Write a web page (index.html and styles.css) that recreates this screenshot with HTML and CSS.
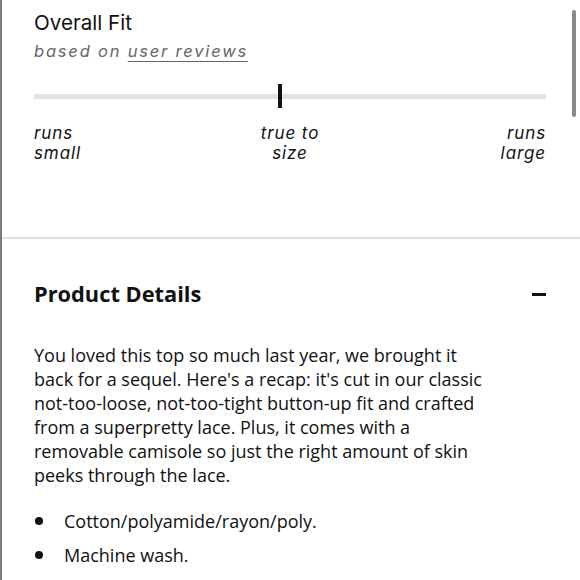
FILE: index.html
```html
<!DOCTYPE html>
<html>
<head>
<meta charset="utf-8">
<link rel="stylesheet" href="styles.css">
</head>
<body>
<div class="page">
  <section class="fit">
    <h2 class="fit-title">Overall Fit</h2>
    <p class="fit-sub">based on <span class="link">user reviews</span></p>
    <div class="track">
      <div class="thumb" style="left: 47.6%"></div>
    </div>
    <div class="labels">
      <span class="lbl lbl-left">runs<br>small</span>
      <span class="lbl lbl-mid">true to<br>size</span>
      <span class="lbl lbl-right">runs<br>large</span>
    </div>
  </section>
  <section class="details">
    <div class="details-head">
      <h2 class="details-title">Product Details</h2>
      <span class="minus"></span>
    </div>
    <p class="desc">You loved this top so much last year, we brought it back for a sequel. Here's a recap: it's cut in our classic <span class="nw">not-too-loose,</span> <span class="nw">not-too-tight</span> <span class="nw">button-up</span> fit and crafted from a superpretty lace. Plus, it comes with a removable camisole so just the right amount of skin peeks through the lace.</p>
    <ul class="bullets">
      <li>Cotton/polyamide/rayon/poly.</li>
      <li>Machine wash.</li>
    </ul>
  </section>
  <div class="scrollbar"></div>
</div>
</body>
</html>
```
FILE: styles.css
```css
html, body {
  margin: 0;
  padding: 0;
  background: #fff;
}
.page {
  position: relative;
  height: 580px;
  overflow: hidden;
  border-left: 2px solid #7a7a7a;
  box-sizing: border-box;
  color: #111;
}
.fit {
  padding: 9px 34px 0 32px;
  height: 228px;
  border-bottom: 2px solid #dedede;
  font-family: "Inter", "Lato", sans-serif;
}
.fit-title {
  margin: 0;
  font-size: 20.6px;
  font-weight: 400;
  line-height: 28px;
  color: #111;
}
.fit-sub {
  margin: 3px 0 0;
  font-size: 16.5px;
  font-style: italic;
  letter-spacing: 1.8px;
  color: #666;
  line-height: 22px;
}
.link {
  text-decoration: underline;
  text-decoration-thickness: 1px;
  text-underline-offset: 4px;
}
.track {
  position: relative;
  margin-top: 32px;
  height: 5px;
  background: #e2e2e2;
}
.thumb {
  position: absolute;
  top: -10px;
  width: 4px;
  height: 24px;
  background: #111;
}
.labels {
  display: flex;
  justify-content: space-between;
  margin-top: 24px;
  font-style: italic;
  font-size: 17px;
  line-height: 20px;
  letter-spacing: 0.9px;
}
.lbl-left { text-align: left; width: 100px; }
.lbl-mid { text-align: center; }
.lbl-right { text-align: right; width: 100px; }
.details {
  padding: 0 34px 0 32px;
  font-family: "Open Sans", sans-serif;
}
.details-head {
  display: flex;
  justify-content: space-between;
  align-items: center;
  margin-top: 41px;
}
.details-title {
  margin: 0;
  font-size: 21.8px;
  font-weight: 700;
  line-height: 28px;
}
.minus {
  width: 14px;
  height: 3px;
  background: #111;
}
.desc {
  margin: 35px 0 0;
  max-width: 464px;
  font-size: 18px;
  line-height: 24px;
}
.nw {
  white-space: nowrap;
}
.bullets {
  list-style: none;
  margin: 17px 0 0;
  padding: 0;
  font-size: 18px;
  line-height: 34px;
}
.bullets li {
  display: flex;
  align-items: center;
}
.bullets li::before {
  content: "";
  width: 8px;
  height: 8px;
  border-radius: 50%;
  background: #111;
  margin: 0 21px 0 1px;
}
.scrollbar {
  position: absolute;
  right: 4px;
  top: 10px;
  width: 4px;
  height: 107px;
  border-radius: 2px;
  background: #8a8a8a;
}
```
